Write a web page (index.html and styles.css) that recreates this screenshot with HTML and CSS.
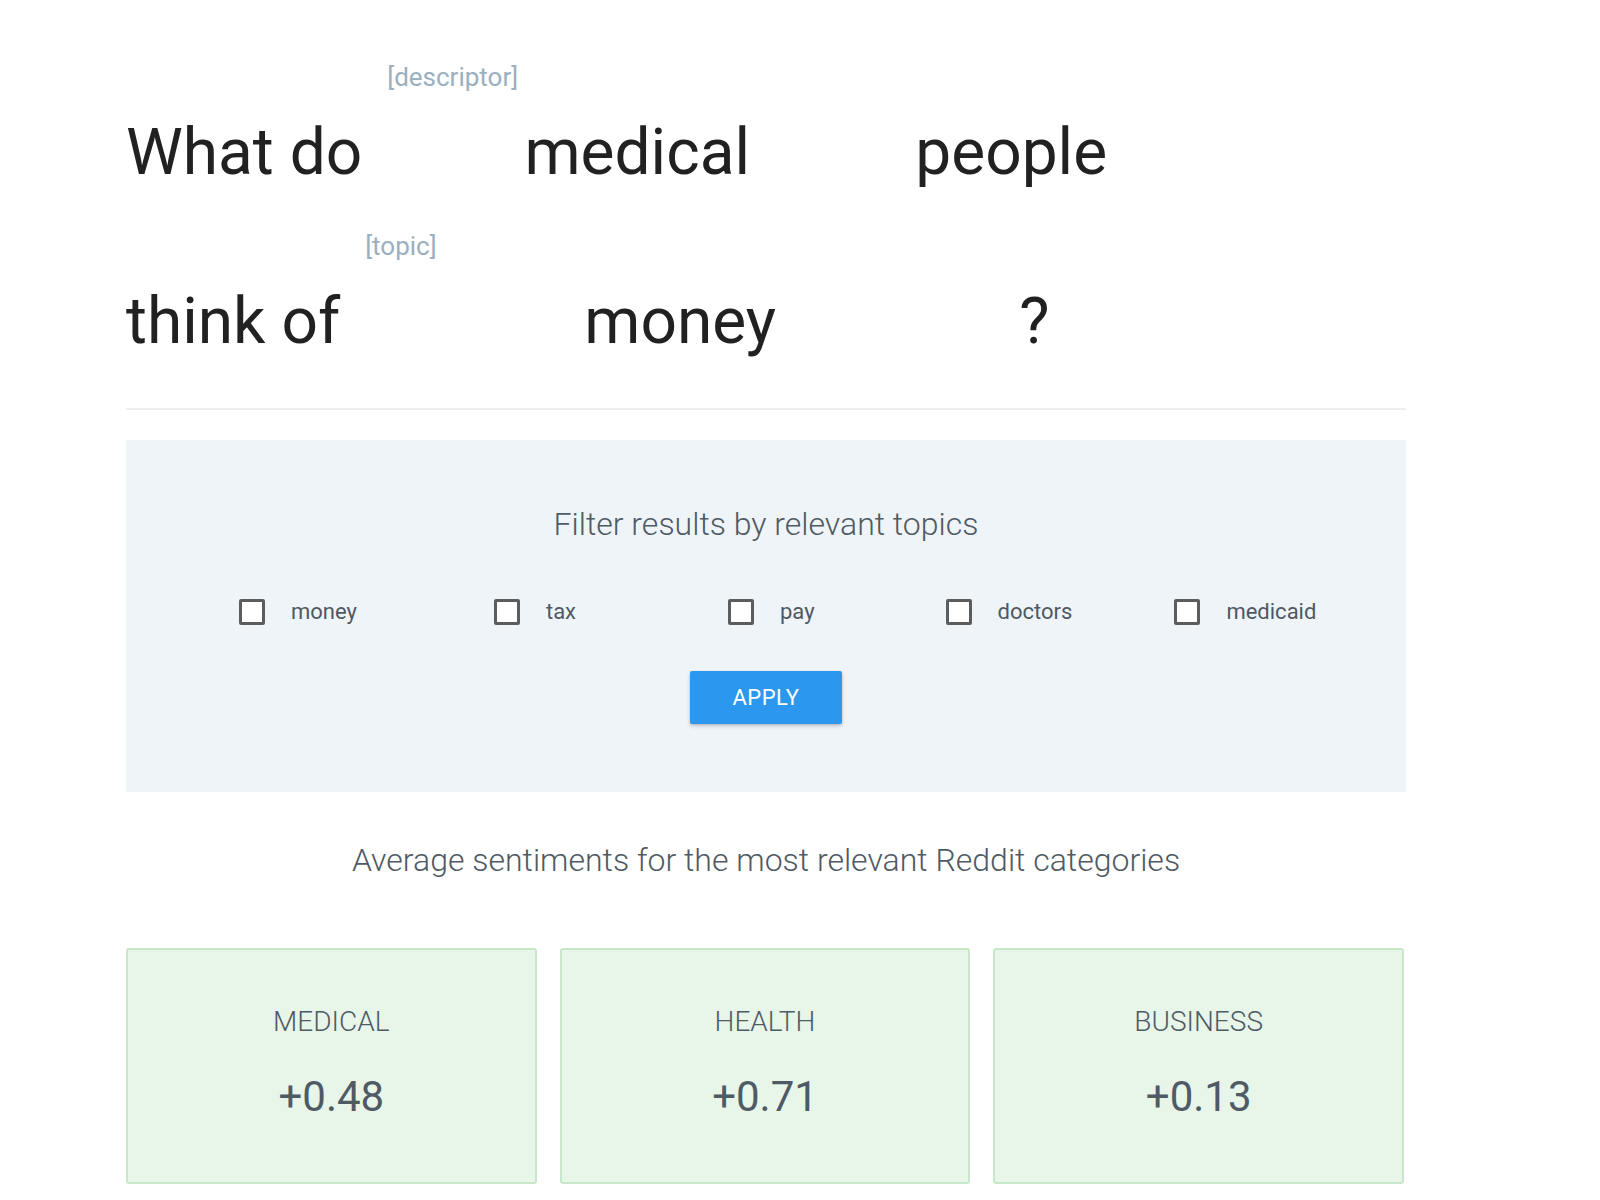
FILE: index.html
```html
<!DOCTYPE html>
<html lang="en">
<head>
<meta charset="utf-8">
<title>What do people think</title>
<link rel="stylesheet" href="styles.css">
</head>
<body>
<main class="page">
  <section class="question">
    <div class="q-row">
      <span class="q-word">What do</span>
      <div class="field field-descriptor">
        <span class="field-label">[descriptor]</span>
        <span class="field-value">medical</span>
      </div>
      <span class="q-word">people</span>
    </div>
    <div class="q-row">
      <span class="q-word">think of</span>
      <div class="field field-topic">
        <span class="field-label">[topic]</span>
        <span class="field-value">money</span>
      </div>
      <span class="q-word">?</span>
    </div>
  </section>

  <hr class="divider">

  <section class="filter">
    <h2 class="filter-title">Filter results by relevant topics</h2>
    <div class="topics">
      <label class="topic topic-money"><span class="box"></span><span class="topic-name">money</span></label>
      <label class="topic topic-tax"><span class="box"></span><span class="topic-name">tax</span></label>
      <label class="topic topic-pay"><span class="box"></span><span class="topic-name">pay</span></label>
      <label class="topic topic-doctors"><span class="box"></span><span class="topic-name">doctors</span></label>
      <label class="topic topic-medicaid"><span class="box"></span><span class="topic-name">medicaid</span></label>
    </div>
    <button class="apply">APPLY</button>
  </section>

  <h2 class="avg-title">Average sentiments for the most relevant Reddit categories</h2>

  <section class="cards">
    <div class="card">
      <div class="card-name">MEDICAL</div>
      <div class="card-value">+0.48</div>
    </div>
    <div class="card">
      <div class="card-name">HEALTH</div>
      <div class="card-value">+0.71</div>
    </div>
    <div class="card">
      <div class="card-name">BUSINESS</div>
      <div class="card-value">+0.13</div>
    </div>
  </section>
</main>
</body>
</html>
```
FILE: styles.css
```css
html, body {
  margin: 0;
  padding: 0;
  background: #ffffff;
}

body {
  font-family: Roboto, "Liberation Sans", sans-serif;
  color: #212121;
}

.page {
  width: 1280px;
  margin-left: 126px;
  padding-top: 62px;
}

.question {
  display: flex;
  flex-direction: column;
  gap: 38px;
}

.q-row {
  display: flex;
  align-items: flex-end;
}

.q-word {
  font-size: 64px;
  line-height: 80px;
  color: #212121;
  white-space: nowrap;
}

.field {
  display: flex;
  flex-direction: column;
  gap: 21px;
}

.field-descriptor {
  width: 500px;
  margin: 0 28px 0 25px;
}

.field-topic {
  width: 630px;
  margin: 0 24px 0 25px;
}

.field-label {
  font-size: 26px;
  line-height: 30px;
  color: #9aafc0;
}

.field-value {
  font-size: 64px;
  line-height: 80px;
  text-align: center;
  color: #212121;
}

.divider {
  margin: 46px 0 0 0;
  border: 0;
  height: 2px;
  background: #eeeeee;
}

.filter {
  margin-top: 30px;
  background: #eff4f8;
  height: 352px;
  box-sizing: border-box;
  padding-top: 65px;
  display: flex;
  flex-direction: column;
  align-items: center;
}

.filter-title {
  margin: 0;
  font-size: 32px;
  line-height: 38px;
  font-weight: 300;
  color: #4f5a64;
}

.topics {
  align-self: stretch;
  display: flex;
  align-items: center;
  margin-top: 56px;
  padding-left: 113px;
}

.topic {
  display: flex;
  align-items: center;
  gap: 26px;
}

.topic-money { margin-right: 137px; }
.topic-tax { margin-right: 152px; }
.topic-pay { margin-right: 131px; }
.topic-doctors { margin-right: 102px; }

.box {
  width: 26px;
  height: 26px;
  box-sizing: border-box;
  border: 3px solid #5c5c5c;
  border-radius: 2px;
  background: #ffffff;
}

.topic-name {
  font-size: 22px;
  line-height: 26px;
  color: #4f5963;
}

.apply {
  margin-top: 46px;
  width: 152px;
  height: 53px;
  border: 0;
  border-radius: 2px;
  background: #2b97ee;
  color: #ffffff;
  font-family: Roboto, "Liberation Sans", sans-serif;
  font-size: 22px;
  letter-spacing: 0.5px;
  box-shadow: 0 2px 4px rgba(0, 0, 0, 0.18), 0 1px 2px rgba(0, 0, 0, 0.1);
}

.avg-title {
  margin: 48px 0 0 0;
  text-align: center;
  font-size: 32px;
  line-height: 40px;
  font-weight: 300;
  color: #4f5a64;
}

.cards {
  margin-top: 68px;
  width: 1278px;
  display: grid;
  grid-template-columns: repeat(3, 1fr);
  gap: 23px;
}

.card {
  height: 236px;
  box-sizing: border-box;
  background: #e8f5e9;
  border: 2px solid #c8e6c9;
  border-radius: 3px;
  padding-top: 55px;
  text-align: center;
  color: #4e5b65;
}

.card-name {
  font-size: 28px;
  line-height: 34px;
  font-weight: 300;
}

.card-value {
  margin-top: 33px;
  font-size: 42px;
  line-height: 50px;
}
```
